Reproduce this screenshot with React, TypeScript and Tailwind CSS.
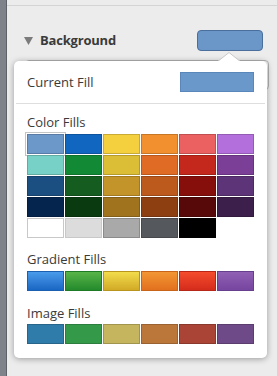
const colorRows = [
  ["#6b97c9", "#1166c0", "#f4d03f", "#f29030", "#eb6060", "#b36fdc"],
  ["#77d1c6", "#128a35", "#dbbd36", "#e06b24", "#c4281c", "#7b3f98"],
  ["#1b4f82", "#145c20", "#c39429", "#bc5a1e", "#860f0c", "#5e3478"],
  ["#05254f", "#0a3a10", "#a0731f", "#8d3f12", "#570808", "#3d1f4b"],
  ["#ffffff", "#dcdcdd", "#a8a9a8", "#55585d", "#000000", ""],
];

const gradients = [
  ["#4a9bea", "#1a66c4", "#1a5fb0"],
  ["#58b448", "#248a2c", "#1f7a26"],
  ["#f2dc4c", "#d2aa26", "#b8961e"],
  ["#f29634", "#e2701e", "#c8631a"],
  ["#f44c2c", "#d42c1c", "#b82618"],
  ["#9060b4", "#7646a0", "#66408c"],
];

const imageFills = ["#2f7baa", "#349a4a", "#c4b55e", "#bb773a", "#aa4436", "#6f4a88"];

function darken(hex: string) {
  const n = parseInt(hex.slice(1), 16);
  const r = Math.round(((n >> 16) & 255) * 0.82);
  const g = Math.round(((n >> 8) & 255) * 0.82);
  const b = Math.round((n & 255) * 0.82);
  return `rgb(${r},${g},${b})`;
}

function Label({ children }: { children: string }) {
  return <p className="text-[13px] leading-[16px] text-[#3a3a3a]">{children}</p>;
}

export default function App() {
  return (
    <div
      className="relative flex w-[277px] h-[376px] overflow-hidden bg-[#ececec]"
      style={{ fontFamily: '"Open Sans", "Noto Sans", sans-serif' }}
    >
      {/* left sidebar edge */}
      <div className="w-[7px] shrink-0 bg-[#7e838b] border-r border-[#5d6168]" />

      <div className="flex-1 flex flex-col">
        <div className="h-[5px]" />
        <div className="h-px bg-[#d4d4d4]" />

        {/* section header */}
        <div className="flex items-center justify-between pl-[17px] pr-[14px] mt-[24px]">
          <div className="flex items-center gap-[7px]">
            <svg width="9" height="8" viewBox="0 0 9 8">
              <path d="M0 0 H9 L4.5 8 Z" fill="#7b7b7b" />
            </svg>
            <span className="text-[13px] font-bold text-[#3a3a3a] tracking-[-0.2px]">Background</span>
          </div>
          <div className="w-[66px] h-[21px] rounded-[4px] bg-[#6a96c8] border border-[#4b6f9c]" />
        </div>

        {/* field behind popover */}
        <div className="mt-[9px] ml-[18px] mr-[8px] h-[30px] rounded-[4px] border border-[#b4b4b4] bg-[#f6f6f6]" />
      </div>

      {/* popover */}
      <div className="absolute left-[14px] top-[61px] w-[253px] h-[297px] rounded-[5px] bg-white shadow-[0_1px_6px_rgba(0,0,0,0.35)]">
        <svg className="absolute left-[203px] -top-[9px]" width="24" height="10" viewBox="0 0 24 10">
          <path d="M0 10 L12 0.5 L24 10 Z" fill="#ffffff" stroke="#c8c8c8" strokeWidth="1" />
          <rect x="0" y="9" width="24" height="2" fill="#ffffff" />
        </svg>

        <div className="flex items-center justify-between h-[42px] pl-[13px] pr-[13px]">
          <Label>Current Fill</Label>
          <div className="w-[74px] h-[20px] bg-[#6a98ca] border border-[#5a87bb]" />
        </div>
        <div className="mx-[2px] h-px bg-[#dedede]" />

        <div className="px-[13px] pt-[10px]">
          <Label>Color Fills</Label>
          <div className="mt-[4px] grid grid-cols-6 gap-[1px] w-[227px]">
            {colorRows.flat().map((c, i) =>
              c ? (
                <div
                  key={i}
                  className={`relative h-[20px] border ${i === 0 ? "outline outline-2 outline-white" : ""}`}
                  style={{ backgroundColor: c, borderColor: c === "#ffffff" || c === "#dcdcdd" ? "#c8c8c8" : darken(c) }}
                >
                  {i === 0 && (
                    <div className="absolute -inset-[3px] border border-[#c4c4c4]" />
                  )}
                </div>
              ) : (
                <div key={i} />
              )
            )}
          </div>

          <div className="mt-[13px]">
            <Label>Gradient Fills</Label>
          </div>
          <div className="mt-[4px] grid grid-cols-6 gap-[1px] w-[227px]">
            {gradients.map(([a, b, border], i) => (
              <div
                key={i}
                className="h-[20px] border"
                style={{ backgroundImage: `linear-gradient(${a}, ${b})`, borderColor: border }}
              />
            ))}
          </div>

          <div className="mt-[14px]">
            <Label>Image Fills</Label>
          </div>
          <div className="mt-[3px] grid grid-cols-6 gap-[1px] w-[227px]">
            {imageFills.map((c, i) => (
              <div key={i} className="h-[20px] border" style={{ backgroundColor: c, borderColor: darken(c) }} />
            ))}
          </div>
        </div>
      </div>
    </div>
  );
}
